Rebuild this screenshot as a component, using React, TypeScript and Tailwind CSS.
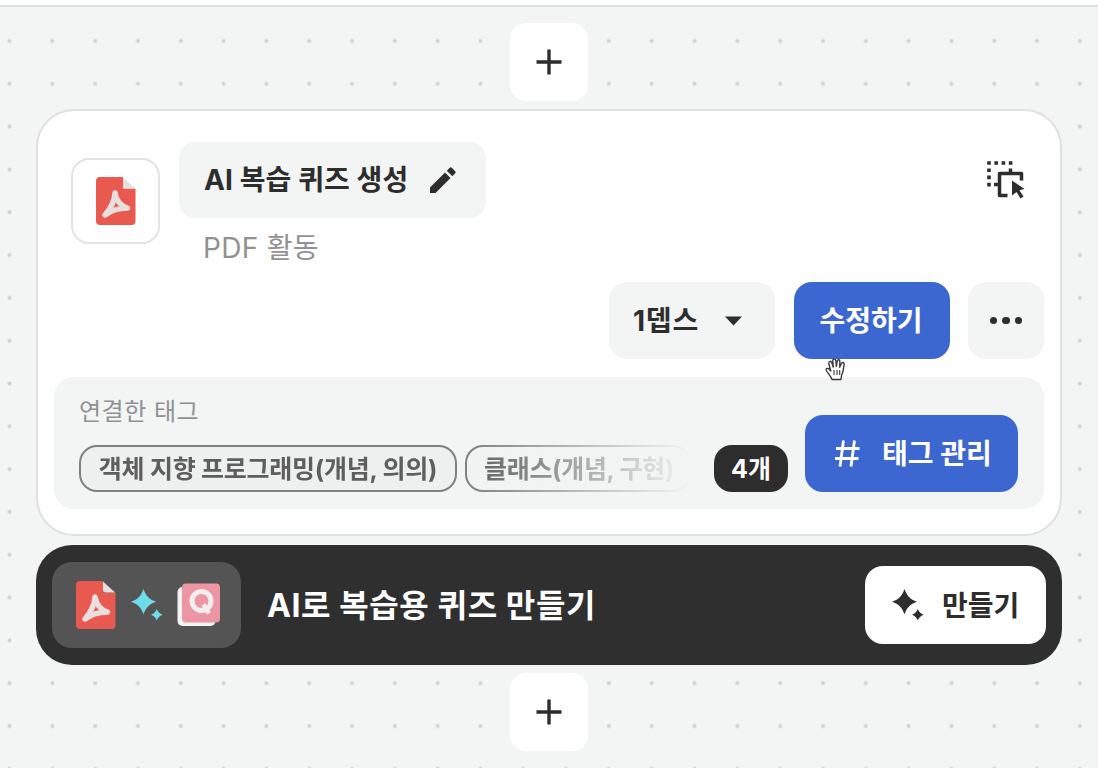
import React, { FC } from 'react';

const PlusButton: FC = () => (
  <button className="flex h-[78px] w-[78px] items-center justify-center rounded-2xl bg-white">
    <svg width="26" height="26" viewBox="0 0 26 26" stroke="#2d2d2d" strokeWidth="3.4">
      <path d="M13 0.5V25.5M0.5 13H25.5" />
    </svg>
  </button>
);

const PdfIcon: FC = () => (
  <svg width="40" height="48" viewBox="0 0 40 48">
    <path d="M4 0H27V11.500H39.500V44a4 4 0 0 1-4 4H4a4 4 0 0 1-4-4V4a4 4 0 0 1 4-4Z" fill="#e85a50" />
    <path d="M27 0.500L39 11.500H29.500a2.500 2.500 0 0 1-2.500-2.500Z" fill="#e3e1df" />
    <path
      d="M19 16C18.500 24 14.500 31.500 9 38C15 33.500 23 31 31.500 31C25 29 20.500 24 19 16Z"
      fill="none"
      stroke="#e9dfdd"
      strokeWidth="5.400"
      strokeLinecap="round"
      strokeLinejoin="round"
    />
  </svg>
);

const SparkleIcon: FC<{ color: string }> = ({ color }) => (
  <svg width="32" height="32" viewBox="0 0 32 32" fill={color}>
    <path d="M12.500 0C15 7 18 10.300 25 12.700C18 15.200 15 18.500 12.500 25.300C10 18.500 7 15.200 0 12.700C7 10.300 10 7 12.500 0Z" />
    <path d="M25.800 20C27 23 28.600 24.600 31.600 25.800C28.600 27 27 28.600 25.800 31.600C24.600 28.600 23 27 20 25.800C23 24.600 24.600 23 25.800 20Z" />
  </svg>
);

const QuizIcon: FC = () => (
  <svg width="44" height="44" viewBox="0 0 44 44">
    <rect x="0.500" y="4" width="38" height="39" rx="5" fill="#f4f2f2" />
    <rect x="5" y="0.500" width="38" height="39" rx="4" fill="#ec96a3" />
    <circle cx="24.500" cy="18" r="9.500" fill="none" stroke="#f2eeee" strokeWidth="5" />
    <path d="M26.500 21.500L32 30.500" stroke="#f2eeee" strokeWidth="4.500" />
  </svg>
);

const SelectIcon: FC = () => (
  <svg width="38" height="38" viewBox="0 0 38 38" fill="none" stroke="#2d2d2d">
    <path
      d="M0.200 2h3.600M7.400 2h3.600M14.600 2h3.600M21.800 2h3.600M0.200 9.200h3.600M0.200 16.400h3.600M0.200 23.600h3.600"
      strokeWidth="3.600"
    />
    <path d="M34.500 19.500V12.500H12.500V34.500H20.500M23.500 12V7.500M12 23.500H7" strokeWidth="3.500" strokeLinejoin="round" />
    <path d="M25 19.500L37.500 28L32.500 29.200L36.500 35.400L33.500 37.500L29.500 31L25 34.500Z" fill="#2d2d2d" stroke="none" />
  </svg>
);

const HandCursor: FC = () => (
  <svg
    className="absolute top-[76px] left-[31px]"
    width="22"
    height="23"
    viewBox="0 0 22 23"
    fill="white"
    stroke="#3a3a3a"
    strokeWidth="1.400"
    strokeLinejoin="round"
  >
    <path d="M7 21.500C6 18.500 3.500 16 1.300 12.500C0.500 10.500 3 9.500 4.500 11.500L5.800 13L3.800 5.500C3.500 3 6 2.500 6.800 4.800L8.200 9L7.800 2.800C7.800 0.500 10.500 0.500 10.900 2.800L11.400 8.500L12.200 3C12.700 1 15 1.400 14.900 3.500L14.700 9.200L16.500 5.500C17.500 3.800 19.700 4.600 19.100 6.800C18 12 18.500 14 16.500 17.500L16 21.500Z" />
    <path d="M9 12V17M12 12V17M14.700 12V17" strokeWidth="1.100" />
  </svg>
);

const TagPanel: FC = () => (
  <div className="mt-[18px] flex h-[132px] items-end rounded-[20px] bg-[#f3f5f5] pr-[26px] pb-[17px] pl-[25px]">
    <div className="flex w-[635px] flex-col">
      <span className="mb-[17px] text-[24px] leading-[32px] tracking-[0.5px] text-[#919191]">연결한 태그</span>
      <div className="flex w-[612px] gap-2 overflow-hidden whitespace-nowrap mask-[linear-gradient(to_right,black_390px,transparent_612px)]">
        <span className="flex h-[47px] w-[378px] shrink-0 items-center justify-center rounded-[18px] border-2 border-[#808080] bg-[#eeefef] pt-0.5 text-[25px] font-bold tracking-[-0.25px] text-[#5e5e5e]">
          객체 지향 프로그래밍(개념, 의의)
        </span>
        <span className="flex h-[47px] w-[226px] shrink-0 items-center rounded-[18px] border-2 border-[#808080] bg-[#f1f2f2] pt-0.5 pl-[17px] text-[25px] font-bold tracking-[-0.3px] text-[#5e5e5e]">
          클래스(개념, 구현)
        </span>
      </div>
    </div>
    <span className="flex h-[47px] w-[74px] items-center justify-center rounded-[18px] bg-[#2d2d2d] pt-0.5 text-[25px] font-bold text-white">
      4개
    </span>
    <button className="ml-auto flex h-[77px] w-[213px] items-center rounded-[18px] bg-[#3d67d0] pl-[30px] text-[28px] font-bold text-white">
      <svg width="25" height="27" viewBox="0 0 25 27" stroke="white" strokeWidth="2.800">
        <path d="M8.500 0.500L5 26.500M19.500 0.500L16 26.500M1 8.500H24.500M0 18.500H23.500" />
      </svg>
      <span className="ml-[22px] pt-px">태그 관리</span>
    </button>
  </div>
);

const ActivityCard: FC = () => (
  <section className="mt-2 h-[427px] w-full rounded-[38px] border-2 border-[#e0e0e0] bg-white px-4 pt-[31px]">
    <div className="flex h-[140px] items-start pl-[17px]">
      <div className="mt-4 flex h-[86px] w-[89px] items-center justify-center rounded-[18px] border-2 border-[#e3e3e3]">
        <PdfIcon />
      </div>
      <div className="ml-[19px]">
        <button className="flex h-[76px] w-[307px] items-center rounded-2xl bg-[#f3f5f5] pr-[30px] pl-[25px] text-[28px] font-bold">
          <span className="tracking-[0.1px] whitespace-nowrap">AI 복습 퀴즈 생성</span>
          <svg className="ml-auto" width="26" height="26" viewBox="0 0 26 26" fill="#2d2d2d">
            <path d="M0 20.500L15 5.500L20.500 11L5.500 26H0ZM16.800 3.700L19.500 1Q20.800 -0.300 22 1L25 4Q26.300 5.300 25 6.500L22.300 9.200Z" />
          </svg>
        </button>
        <p className="mt-[10px] pl-6 text-[28px] leading-[40px] tracking-[0.3px] text-[#919191]">PDF 활동</p>
      </div>
      <button className="mt-[19px] mr-[19px] ml-auto">
        <SelectIcon />
      </button>
    </div>

    <div className="flex h-[77px] justify-end text-[28px] font-bold">
      <button className="mr-[19px] flex w-[166px] items-center rounded-[18px] bg-[#f3f5f5] pl-6">
        <span className="pt-px tracking-[0.8px]">1뎁스</span>
        <svg className="ml-auto mr-[33px]" width="17" height="10" viewBox="0 0 17 10" fill="#2d2d2d">
          <path d="M0 0.500H17L8.500 9.500Z" />
        </svg>
      </button>
      <div className="relative mr-[18px] flex w-[156px]">
        <button className="w-full rounded-[18px] bg-[#3d67d0] pt-px pr-0.5 text-white">수정하기</button>
        <HandCursor />
      </div>
      <button className="flex w-[76px] items-center justify-center gap-[5px] rounded-[18px] bg-[#f3f5f5]">
        <i className="h-[7.500px] w-[7.500px] rounded-full bg-[#2d2d2d]" />
        <i className="h-[7.500px] w-[7.500px] rounded-full bg-[#2d2d2d]" />
        <i className="h-[7.500px] w-[7.500px] rounded-full bg-[#2d2d2d]" />
      </button>
    </div>

    <TagPanel />
  </section>
);

const AiBanner: FC = () => (
  <section className="mt-[9px] mb-2 flex h-[120px] w-full items-center rounded-[36px] bg-[#2f2f2f] pr-4 pl-4">
    <div className="flex h-[86px] w-[189px] items-center rounded-[20px] bg-[#545454] pl-6">
      <PdfIcon />
      <div className="ml-[15px]">
        <SparkleIcon color="#6edbe9" />
      </div>
      <div className="ml-[14px]">
        <QuizIcon />
      </div>
    </div>
    <h2 className="ml-[26px] pt-px text-[32px] font-bold tracking-[0.6px] text-white">AI로 복습용 퀴즈 만들기</h2>
    <button className="ml-auto flex h-[78px] w-[181px] items-center rounded-[18px] bg-white pl-[27px] text-[28px] font-bold">
      <SparkleIcon color="#2d2d2d" />
      <span className="ml-[18px] pt-0.5">만들기</span>
    </button>
  </section>
);

const App: FC = () => {
  return (
    <div className="h-[768px] w-[1098px] overflow-hidden bg-[#f3f5f5] font-['Inter','Noto_Sans_CJK_KR',sans-serif] text-[#2d2d2d]">
      <div className="h-[7px] border-b-2 border-[#dedede] bg-white" />
      <main className="flex h-[761px] flex-col items-center bg-[radial-gradient(circle_at_center,#d2d2d2_1.500px,transparent_2.500px)] bg-size-[42.820px_42.820px] bg-position-[-11.900px_12.600px] pt-4 pr-9 pl-9">
        <PlusButton />
        <ActivityCard />
        <AiBanner />
        <PlusButton />
      </main>
    </div>
  );
};

export default App;
